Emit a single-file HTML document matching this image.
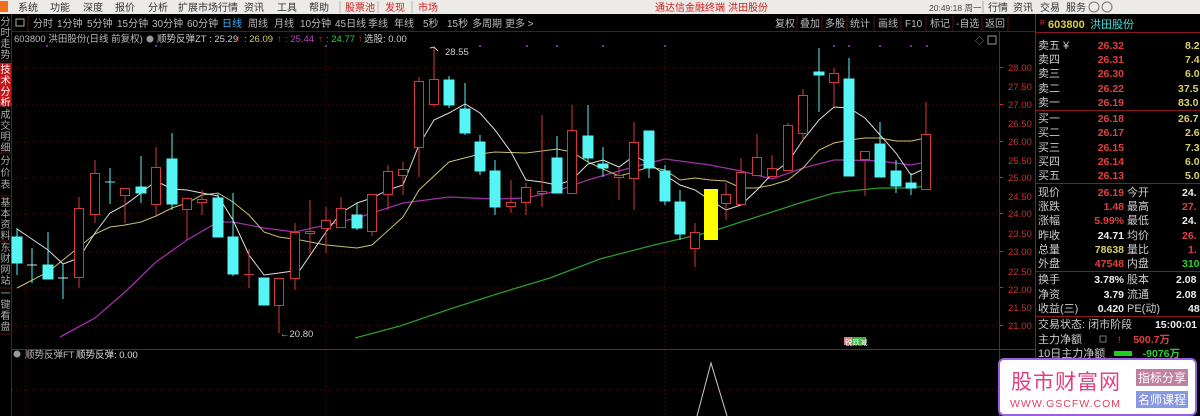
<!DOCTYPE html>
<html><head><meta charset="utf-8"><style>
*{margin:0;padding:0}
body{width:1200px;height:416px;overflow:hidden;background:#000;font-family:"Liberation Sans","Noto Sans CJK SC",sans-serif}
svg{display:block}
text{font-family:"Liberation Sans","Noto Sans CJK SC",sans-serif}
</style></head><body>
<svg width="1200" height="416" viewBox="0 0 1200 416" xmlns="http://www.w3.org/2000/svg">
<rect width="1200" height="416" fill="#000"/>
<rect width="1200" height="14" fill="#ecebe8"/>
<rect x="0" y="1" width="8" height="11" fill="#f07020"/>
<g font-size="10" fill="#333">
<text x="18" y="11">系统</text><text x="50" y="11">功能</text><text x="83" y="11">深度</text><text x="115" y="11">报价</text><text x="148" y="11">分析</text><text x="178" y="11">扩展市场行情</text><text x="244" y="11">资讯</text><text x="277" y="11">工具</text><text x="309" y="11">帮助</text>
</g>
<g font-size="10" fill="#d02020"><text x="345" y="11">股票池</text><text x="385" y="11">发现</text><text x="418" y="11">市场</text>
<text x="655" y="11">通达信金融终端</text><text x="728" y="11">洪田股份</text></g>
<line x1="340" y1="1" x2="340" y2="13" stroke="#c0b0b0"/><line x1="378" y1="1" x2="378" y2="13" stroke="#c0b0b0"/><line x1="412" y1="1" x2="412" y2="13" stroke="#c0b0b0"/>
<text x="929" y="11" font-size="8.5" fill="#444">20:49:18 周一</text>
<line x1="983" y1="1" x2="983" y2="13" stroke="#aaa"/>
<g font-size="10" fill="#333"><text x="988" y="11">行情</text><text x="1013" y="11">资讯</text><text x="1040" y="11">交易</text><text x="1066" y="11">服务</text></g>
<circle cx="1094" cy="7" r="5" fill="none" stroke="#777"/><circle cx="1107" cy="7" r="5" fill="none" stroke="#777"/>
<line x1="11.5" y1="14" x2="11.5" y2="416" stroke="#7a1414"/>
<rect x="0" y="63" width="11" height="43" fill="#c01818"/>
<g font-size="10" fill="#aaa" text-anchor="middle">
<text x="5.5" y="25">分</text><text x="5.5" y="36">时</text><text x="5.5" y="47">走</text><text x="5.5" y="58">势</text>
<text x="5.5" y="73" fill="#fff">技</text><text x="5.5" y="84" fill="#fff">术</text><text x="5.5" y="95" fill="#fff">分</text><text x="5.5" y="106" fill="#fff">析</text>
<text x="5.5" y="118">成</text><text x="5.5" y="129">交</text><text x="5.5" y="140">明</text><text x="5.5" y="151">细</text>
<text x="5.5" y="164">分</text><text x="5.5" y="176">价</text><text x="5.5" y="188">表</text>
<text x="5.5" y="206">基</text><text x="5.5" y="217">本</text><text x="5.5" y="228">资</text><text x="5.5" y="239">料</text>
<text x="5.5" y="251">东</text><text x="5.5" y="262">财</text><text x="5.5" y="273">网</text><text x="5.5" y="284">站</text>
<text x="5.5" y="297">一</text><text x="5.5" y="308">键</text><text x="5.5" y="319">看</text><text x="5.5" y="330">盘</text>
</g>
<g stroke="#5a1010"><line x1="0" y1="61" x2="11" y2="61"/><line x1="0" y1="107" x2="11" y2="107"/><line x1="0" y1="153" x2="11" y2="153"/><line x1="0" y1="196" x2="11" y2="196"/><line x1="0" y1="241" x2="11" y2="241"/><line x1="0" y1="288" x2="11" y2="288"/><line x1="0" y1="334" x2="11" y2="334"/></g>
<line x1="12" y1="31.5" x2="1035" y2="31.5" stroke="#6a1010"/>
<rect x="16" y="19" width="8" height="7" fill="none" stroke="#aaa"/>
<line x1="28" y1="16" x2="28" y2="31" stroke="#5a1010"/>
<g font-size="10" fill="#bbb">
<text x="33" y="27">分时</text><text x="57" y="27">1分钟</text><text x="87" y="27">5分钟</text><text x="117" y="27">15分钟</text><text x="152" y="27">30分钟</text><text x="187" y="27">60分钟</text><text x="222" y="27" fill="#3fb0ff">日线</text><text x="248" y="27">周线</text><text x="274" y="27">月线</text><text x="300" y="27">10分钟</text><text x="335" y="27">45日线</text><text x="368" y="27">季线</text><text x="394" y="27">年线</text><text x="423" y="27">5秒</text><text x="447" y="27">15秒</text><text x="472" y="27">多周期</text><text x="505" y="27">更多 &gt;</text>
<text x="775" y="27">复权</text><text x="800" y="27">叠加</text><text x="825" y="27">多股</text><text x="850" y="27">统计</text><text x="878" y="27">画线</text><text x="905" y="27">F10</text><text x="930" y="27">标记</text><text x="956" y="27">-自选</text><text x="985" y="27">返回</text>
</g>
<g stroke="#5a1010"><line x1="797" y1="16" x2="797" y2="31"/><line x1="822" y1="16" x2="822" y2="31"/><line x1="847" y1="16" x2="847" y2="31"/><line x1="874" y1="16" x2="874" y2="31"/><line x1="901" y1="16" x2="901" y2="31"/><line x1="926" y1="16" x2="926" y2="31"/><line x1="953" y1="16" x2="953" y2="31"/><line x1="982" y1="16" x2="982" y2="31"/><line x1="1008" y1="16" x2="1008" y2="31"/></g>
<g font-size="9.5">
<text x="14" y="42" fill="#bbb">603800 洪田股份(日线 前复权)</text>
<circle cx="150" cy="39" r="3.5" fill="#999"/>
<text x="157" y="42" fill="#ccc">顺势反弹ZT : 25.29</text><text x="236" y="42" fill="#e03030">↑</text>
<text x="244" y="42" fill="#d8d060">: 26.09</text><text x="277" y="42" fill="#e03030">↑</text>
<text x="285" y="42" fill="#c040c0">: 25.44</text><text x="318" y="42" fill="#e03030">↑</text>
<text x="326" y="42" fill="#30d030">: 24.77</text><text x="358" y="42" fill="#e03030">↑</text>
<text x="364" y="42" fill="#ccc">选股: 0.00</text>
</g>
<text x="975" y="44" font-size="9" fill="#999">◇</text><rect x="988" y="36" width="8" height="8" fill="none" stroke="#999"/>
<g stroke="#5a1414" stroke-dasharray="1 3">
<line x1="12" y1="68" x2="998" y2="68"/><line x1="12" y1="105" x2="998" y2="105"/><line x1="12" y1="142" x2="998" y2="142"/><line x1="12" y1="178" x2="998" y2="178"/><line x1="12" y1="214" x2="998" y2="214"/><line x1="12" y1="252" x2="998" y2="252"/><line x1="12" y1="288" x2="998" y2="288"/><line x1="12" y1="326" x2="998" y2="326"/><line x1="12" y1="390" x2="998" y2="390"/>
<line x1="26" y1="46" x2="26" y2="416"/><line x1="326" y1="46" x2="326" y2="416"/><line x1="665" y1="46" x2="665" y2="416"/>
</g>
<line x1="12" y1="349.5" x2="1035" y2="349.5" stroke="#8a1a1a"/>
<line x1="999.5" y1="32" x2="999.5" y2="416" stroke="#8a1a1a"/>
<line x1="1035.5" y1="14" x2="1035.5" y2="416" stroke="#8a1a1a"/>
<g font-size="9.5" fill="#c83030">
<text x="1008" y="71">28.00</text><text x="1008" y="90">27.50</text><text x="1008" y="108">27.00</text><text x="1008" y="127">26.50</text><text x="1008" y="145">26.00</text><text x="1008" y="164">25.50</text><text x="1008" y="181">25.00</text><text x="1008" y="200">24.50</text><text x="1008" y="217">24.00</text><text x="1008" y="237">23.50</text><text x="1008" y="255">23.00</text><text x="1008" y="275">22.50</text><text x="1008" y="293">22.00</text><text x="1008" y="311">21.50</text><text x="1008" y="329">21.00</text>
</g>
<g fill="#c83030"><rect x="1000" y="67" width="3" height="1"/><rect x="1000" y="104" width="3" height="1"/><rect x="1000" y="141" width="3" height="1"/><rect x="1000" y="177" width="3" height="1"/><rect x="1000" y="213" width="3" height="1"/><rect x="1000" y="251" width="3" height="1"/><rect x="1000" y="287" width="3" height="1"/><rect x="1000" y="325" width="3" height="1"/></g>
<g fill="#a040c0"><circle cx="47" cy="46" r="1"/><circle cx="156" cy="46" r="1"/><circle cx="326" cy="46" r="1"/><circle cx="480" cy="46" r="1"/><circle cx="527" cy="46" r="1"/><circle cx="557" cy="46" r="1"/><circle cx="603" cy="46" r="1"/><circle cx="665" cy="46" r="1"/><circle cx="834" cy="46" r="1"/><circle cx="849" cy="46" r="1"/><circle cx="880" cy="46" r="1"/><circle cx="911" cy="46" r="1"/><circle cx="927" cy="46" r="1"/></g>
<polyline fill="none" stroke="#2a9a2a" stroke-width="1.3" points="355,338 400,326 450,309 500,293 550,278 600,259 650,246 680,239 710,232 741,222 772,212 803,202 834,193 849,191 880,188 911,188 926,186"/>
<polyline fill="none" stroke="#a030a8" stroke-width="1.3" points="60,337 95,318 125,292 156,262 187,240 218,222 233,222 264,228 295,232 357,218 403,203 449,197 495,199 526,198 557,191 588,180 619,171 649,163 665,159 695,163 710,165 741,171 772,179 803,168 834,160 849,160 880,161 911,165 926,162"/>
<polyline fill="none" stroke="#c8c070" stroke-width="1" points="17,288 48,272 63,260 79,247 95,234 110,227 125,225 141,222 156,216 172,208 187,203 202,195 218,193 233,202 249,215 264,232 279,237 300,240 326,245 357,248 372,245 403,217 419,190 449,162 480,154 495,152 526,153 542,151 557,149 572,152 588,162 603,169 619,176 634,172 649,167 665,170 680,180 695,178 710,180 726,181 741,188 757,188 772,185 788,180 803,168 819,150 834,143 849,140 865,138 880,138 896,141 911,141 926,138"/>
<polyline fill="none" stroke="#ddd" stroke-width="1" points="17,229 48,250 63,264 79,258 95,233 110,213 125,205 141,193 156,181 172,189 187,190 202,193 218,196 233,220 249,255 264,275 279,273 300,270 326,232 341,213 357,203 372,198 388,190 403,185 419,145 434,120 449,113 465,104 480,113 495,130 511,152 526,180 542,182 557,185 572,180 588,164 603,160 619,167 634,156 649,163 665,175 680,185 695,190 710,200 726,210 741,205 757,190 772,174 788,162 803,140 819,120 834,107 849,108 865,118 880,135 896,153 911,175 926,168"/>
<g stroke="#d23a3a" fill="#000">
<line x1="79" y1="197" x2="79" y2="288"/><rect x="74.5" y="208.5" width="9" height="69"/>
<line x1="95" y1="160" x2="95" y2="223"/><rect x="90.5" y="173.5" width="9" height="41"/>
<line x1="125" y1="188" x2="125" y2="223"/><rect x="120.5" y="188.5" width="9" height="7"/>
<line x1="156" y1="147" x2="156" y2="215"/><rect x="151.5" y="167.5" width="9" height="37"/>
<line x1="187" y1="198" x2="187" y2="240"/><rect x="182.5" y="198.5" width="9" height="11"/>
<line x1="202" y1="190" x2="202" y2="215"/><rect x="197.5" y="199.5" width="9" height="3"/>
<line x1="249" y1="249" x2="249" y2="288"/><line x1="244" y1="274.5" x2="254" y2="274.5"/>
<line x1="279" y1="278" x2="279" y2="333"/><rect x="274.5" y="278.5" width="9" height="27"/>
<line x1="295" y1="223" x2="295" y2="290"/><rect x="290.5" y="232.5" width="9" height="46"/>
<line x1="310" y1="200" x2="310" y2="253"/><rect x="305.5" y="231.5" width="9" height="2"/>
<line x1="326" y1="207" x2="326" y2="253"/><rect x="321.5" y="220.5" width="9" height="8"/>
<line x1="341" y1="197" x2="341" y2="227"/><rect x="336.5" y="208.5" width="9" height="19"/>
<line x1="372" y1="194" x2="372" y2="236"/><rect x="367.5" y="194.5" width="9" height="37"/>
<line x1="388" y1="165" x2="388" y2="210"/><rect x="383.5" y="171.5" width="9" height="23"/>
<line x1="403" y1="162" x2="403" y2="195"/><rect x="398.5" y="169.5" width="9" height="6"/>
<line x1="419" y1="77" x2="419" y2="177"/><rect x="414.5" y="81.5" width="9" height="66"/>
<line x1="434" y1="47" x2="434" y2="107"/><rect x="429.5" y="79.5" width="9" height="25"/>
<line x1="511" y1="180" x2="511" y2="213"/><rect x="506.5" y="202.5" width="9" height="4"/>
<line x1="526" y1="183" x2="526" y2="215"/><rect x="521.5" y="187.5" width="9" height="15"/>
<line x1="542" y1="115" x2="542" y2="207"/><rect x="537.5" y="191.5" width="9" height="2"/>
<line x1="572" y1="105" x2="572" y2="193"/><rect x="567.5" y="130.5" width="9" height="63"/>
<line x1="619" y1="167" x2="619" y2="200"/><rect x="614.5" y="175.5" width="9" height="2"/>
<line x1="634" y1="122" x2="634" y2="210"/><rect x="629.5" y="142.5" width="9" height="36"/>
<line x1="695" y1="223" x2="695" y2="267"/><rect x="690.5" y="232.5" width="9" height="16"/>
<line x1="726" y1="183" x2="726" y2="220"/><rect x="721.5" y="194.5" width="9" height="9"/>
<line x1="741" y1="158" x2="741" y2="204"/><rect x="736.5" y="172.5" width="9" height="32"/>
<line x1="757" y1="134" x2="757" y2="175"/><rect x="752.5" y="157.5" width="9" height="18"/>
<line x1="772" y1="155" x2="772" y2="176"/><rect x="767.5" y="168.5" width="9" height="8"/>
<line x1="788" y1="123" x2="788" y2="170"/><rect x="783.5" y="125.5" width="9" height="45"/>
<line x1="803" y1="89" x2="803" y2="140"/><rect x="798.5" y="95.5" width="9" height="38"/>
<line x1="834" y1="68" x2="834" y2="107"/><rect x="829.5" y="73.5" width="9" height="9"/>
<line x1="865" y1="151" x2="865" y2="196"/><rect x="860.5" y="151.5" width="9" height="8"/>
<line x1="926" y1="102" x2="926" y2="189"/><rect x="921.5" y="134.5" width="9" height="55"/>
</g>
<g stroke="#55f5f5" fill="#55f5f5">
<line x1="17" y1="228" x2="17" y2="275"/><rect x="12" y="237" width="10" height="26"/>
<line x1="32" y1="248" x2="32" y2="283"/><line x1="27" y1="265" x2="37" y2="265" stroke="#ddd"/>
<line x1="48" y1="232" x2="48" y2="279"/><rect x="43" y="265" width="10" height="14"/>
<line x1="63" y1="264" x2="63" y2="299"/><line x1="58" y1="278" x2="68" y2="278" stroke="#ddd"/>
<line x1="110" y1="168" x2="110" y2="204"/><line x1="105" y1="182" x2="115" y2="182"/>
<line x1="141" y1="156" x2="141" y2="203"/><rect x="136" y="187" width="10" height="6"/>
<line x1="172" y1="133" x2="172" y2="210"/><rect x="167" y="159" width="10" height="45"/>
<line x1="218" y1="194" x2="218" y2="237"/><rect x="213" y="198" width="10" height="39"/>
<line x1="233" y1="193" x2="233" y2="276"/><rect x="228" y="237" width="10" height="37"/>
<rect x="259" y="278" width="10" height="27"/>
<line x1="357" y1="203" x2="357" y2="230"/><rect x="352" y="215" width="10" height="13"/>
<line x1="449" y1="76" x2="449" y2="108"/><rect x="444" y="80" width="10" height="25"/>
<line x1="465" y1="83" x2="465" y2="135"/><rect x="460" y="109" width="10" height="24"/>
<line x1="480" y1="135" x2="480" y2="175"/><rect x="475" y="142" width="10" height="29"/>
<line x1="495" y1="160" x2="495" y2="215"/><rect x="490" y="171" width="10" height="36"/>
<line x1="557" y1="136" x2="557" y2="193"/><rect x="552" y="158" width="10" height="35"/>
<line x1="588" y1="105" x2="588" y2="162"/><rect x="583" y="136" width="10" height="22"/>
<line x1="603" y1="147" x2="603" y2="177"/><rect x="598" y="164" width="10" height="4"/>
<line x1="649" y1="131" x2="649" y2="178"/><rect x="644" y="131" width="10" height="37"/>
<line x1="665" y1="165" x2="665" y2="205"/><rect x="660" y="171" width="10" height="30"/>
<line x1="680" y1="190" x2="680" y2="240"/><rect x="675" y="202" width="10" height="32"/>
<line x1="819" y1="48" x2="819" y2="112"/><rect x="814" y="72" width="10" height="3"/>
<line x1="849" y1="58" x2="849" y2="176"/><rect x="844" y="79" width="10" height="97"/>
<line x1="880" y1="122" x2="880" y2="177"/><rect x="875" y="144" width="10" height="33"/>
<line x1="896" y1="160" x2="896" y2="193"/><rect x="891" y="171" width="10" height="15"/>
<line x1="911" y1="173" x2="911" y2="195"/><rect x="906" y="183" width="10" height="5"/>
</g>
<rect x="704" y="189" width="14" height="51" fill="#ffff00"/>
<path d="M430 48 L434 47 L438 51" fill="none" stroke="#ccc"/>
<text x="445" y="55" font-size="9.5" fill="#ccc">28.55</text>
<text x="280" y="337" font-size="9.5" fill="#ccc">←20.80</text>
<rect x="844" y="337" width="12" height="8" fill="#d08080"/><rect x="852" y="337" width="14" height="8" fill="#40b040"/>
<text x="845" y="345" font-size="7.5" fill="#fff">锐跃减</text>
<circle cx="17" cy="354" r="3.5" fill="#999"/>
<text x="25" y="358" font-size="9.5" fill="#bbb">顺势反弹FT</text>
<text x="76" y="358" font-size="9.5" fill="#ddd">顺势反弹: 0.00</text>
<polyline points="697,416 711,363 727,416" fill="none" stroke="#ccc" stroke-width="1"/>
<text x="1040" y="25" font-size="7" fill="#e03030">R</text>
<text x="1048" y="28" font-size="11" font-weight="bold" fill="#e0d040">603800</text>
<text x="1090" y="28" font-size="11" fill="#40e0e0">洪田股份</text>
<line x1="1036" y1="32.5" x2="1200" y2="32.5" stroke="#8a1a1a"/>
<g font-size="11" fill="#ccc">
<text x="1038" y="49">卖五 ¥</text><text x="1038" y="63">卖四</text><text x="1038" y="77">卖三</text><text x="1038" y="92">卖二</text><text x="1038" y="106">卖一</text>
<text x="1038" y="122">买一</text><text x="1038" y="136">买二</text><text x="1038" y="151">买三</text><text x="1038" y="165">买四</text><text x="1038" y="179">买五</text>
<text x="1038" y="196">现价</text><text x="1038" y="210">涨跌</text><text x="1038" y="224">涨幅</text><text x="1038" y="239">昨收</text><text x="1038" y="253">总量</text><text x="1038" y="267">外盘</text>
<text x="1038" y="283">换手</text><text x="1038" y="298">净资</text><text x="1038" y="312">收益(三)</text>
<text x="1038" y="328">交易状态: 闭市阶段</text><text x="1038" y="343">主力净额</text><text x="1038" y="357">10日主力净额</text>
<text x="1127" y="196">今开</text><text x="1127" y="210">最高</text><text x="1127" y="224">最低</text><text x="1127" y="239">均价</text><text x="1127" y="253">量比</text><text x="1127" y="267">内盘</text>
<text x="1127" y="283">股本</text><text x="1127" y="298">流通</text><text x="1127" y="312">PE(动)</text>
</g>
<g font-size="10.5" font-weight="bold" text-anchor="end">
<g fill="#e04040"><text x="1124" y="49">26.32</text><text x="1124" y="63">26.31</text><text x="1124" y="77">26.30</text><text x="1124" y="92">26.22</text><text x="1124" y="106">26.19</text><text x="1124" y="122">26.18</text><text x="1124" y="136">26.17</text><text x="1124" y="151">26.15</text><text x="1124" y="165">26.14</text><text x="1124" y="179">26.13</text>
<text x="1124" y="196">26.19</text><text x="1124" y="210">1.48</text><text x="1124" y="224">5.99%</text><text x="1124" y="267">47548</text></g>
<g fill="#eee"><text x="1124" y="239">24.71</text><text x="1124" y="283">3.78%</text><text x="1124" y="298">3.79</text><text x="1124" y="312">0.420</text><text x="1197" y="328">15:00:01</text></g>
<text x="1124" y="253" fill="#d8d070">78638</text>
</g>
<g font-size="10.5" font-weight="bold">
<g fill="#d8d070"><text x="1185" y="49">8.2</text><text x="1185" y="63">7.4</text><text x="1185" y="77">6.0</text><text x="1178" y="92">37.5</text><text x="1178" y="106">83.0</text><text x="1178" y="122">26.7</text><text x="1185" y="136">2.6</text><text x="1185" y="151">7.3</text><text x="1185" y="165">6.0</text><text x="1185" y="179">5.0</text></g>
<g fill="#eee"><text x="1182" y="196">24.</text><text x="1182" y="224">24.</text><text x="1176" y="283">2.08</text><text x="1176" y="298">2.08</text><text x="1188" y="312">48</text></g>
<g fill="#e04040"><text x="1182" y="210">27.</text><text x="1182" y="239">26.</text><text x="1188" y="253">1.</text></g>
<text x="1182" y="267" fill="#30d030">310</text>
</g>
<g stroke="#8a1a1a"><line x1="1036" y1="110.5" x2="1200" y2="110.5"/><line x1="1036" y1="183.5" x2="1200" y2="183.5"/><line x1="1036" y1="271.5" x2="1200" y2="271.5"/><line x1="1036" y1="316.5" x2="1200" y2="316.5"/></g>
<rect x="1100" y="336" width="6" height="6" fill="none" stroke="#777"/>
<text x="1118" y="343" font-size="9" fill="#e04040">!</text>
<text x="1170" y="343" font-size="10.5" font-weight="bold" fill="#e04040" text-anchor="end">500.7万</text>
<rect x="1114" y="351" width="18" height="5" fill="#20d020"/>
<text x="1180" y="357" font-size="10.5" font-weight="bold" fill="#30d030" text-anchor="end">-9076万</text>
<rect x="999" y="359" width="197" height="56" rx="5" fill="#fff" stroke="#9a60e0" stroke-width="2"/>
<text x="1011" y="389" font-size="21" fill="#e04080" font-family="'Noto Serif CJK SC',serif" letter-spacing="1">股市财富网</text>
<text x="1010" y="407" font-size="10.5" fill="#e04060" font-family="'Liberation Serif',serif" letter-spacing="1">WWW.GSCFW.COM</text>
<rect x="1136" y="369" width="52" height="17" fill="#c080a0"/>
<text x="1162" y="382" font-size="12" fill="#fff" text-anchor="middle">指标分享</text>
<rect x="1136" y="391" width="52" height="17" fill="#8898e0"/>
<text x="1162" y="404" font-size="12" fill="#fff" text-anchor="middle">名师课程</text>
</svg>
</body></html>
